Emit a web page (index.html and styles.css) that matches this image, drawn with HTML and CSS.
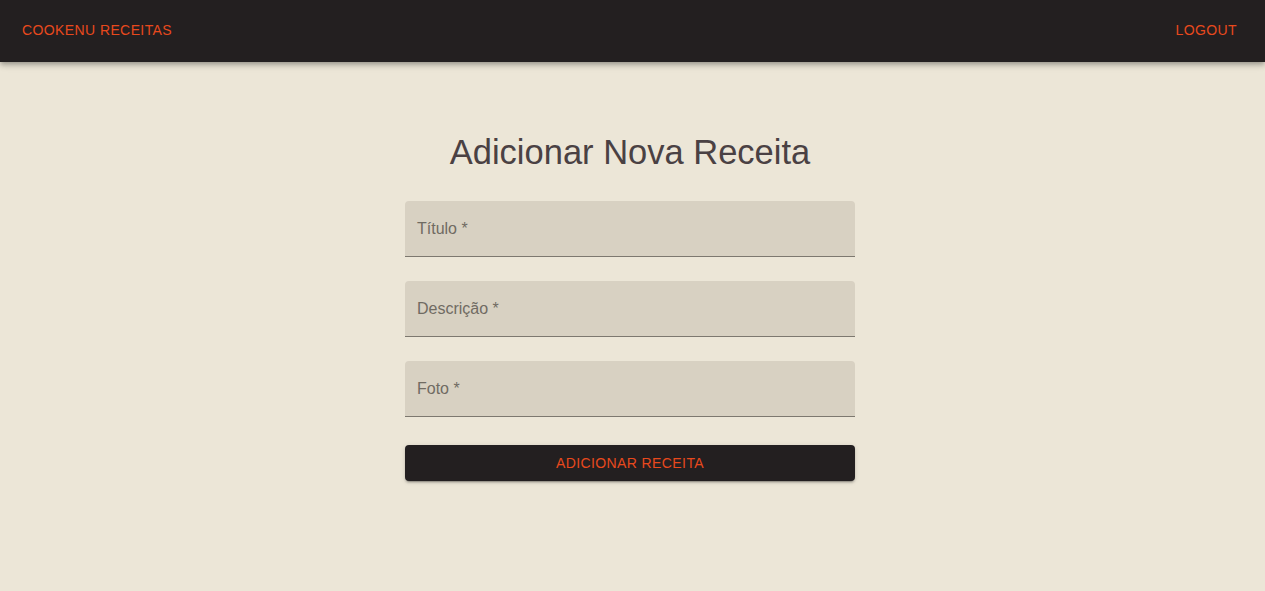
FILE: index.html
```html
<!DOCTYPE html>
<html lang="pt">
<head>
<meta charset="utf-8">
<title>Cookenu Receitas</title>
<link rel="stylesheet" href="styles.css">
</head>
<body>
<header class="appbar">
  <button class="nav-btn">Cookenu Receitas</button>
  <button class="nav-btn">Logout</button>
</header>
<main class="page">
  <h1 class="title">Adicionar Nova Receita</h1>
  <form class="form">
    <div class="field"><label class="label">Título *</label></div>
    <div class="field"><label class="label">Descrição *</label></div>
    <div class="field"><label class="label">Foto *</label></div>
    <button type="button" class="submit">Adicionar Receita</button>
  </form>
</main>
</body>
</html>
```
FILE: styles.css
```css
* { box-sizing: border-box; }
html, body { margin: 0; padding: 0; }
body {
  background: #ece6d7;
  font-family: "Liberation Sans", Arial, sans-serif;
  height: 591px;
  overflow: hidden;
}
.appbar {
  height: 62px;
  background: #231f20;
  display: flex;
  align-items: center;
  justify-content: space-between;
  padding: 0 20px 2px 14px;
  box-shadow: 0 2px 4px -1px rgba(0,0,0,0.2), 0 4px 5px 0 rgba(0,0,0,0.14), 0 1px 10px 0 rgba(0,0,0,0.12);
  position: relative;
}
.nav-btn {
  background: none;
  border: none;
  color: #e8491d;
  font-family: "Liberation Sans", Arial, sans-serif;
  font-size: 14px;
  letter-spacing: 0.4px;
  text-transform: uppercase;
  padding: 6px 8px;
  line-height: 1.75;
  cursor: pointer;
}
.page {
  display: flex;
  flex-direction: column;
  align-items: center;
  padding-top: 64px;
  padding-right: 5px;
}
.title {
  margin: 0;
  font-weight: 400;
  font-size: 34.5px;
  line-height: 52px;
  color: #4a4143;
}
.form {
  width: 450px;
  display: flex;
  flex-direction: column;
  margin-top: 23px;
}
.field {
  height: 56px;
  background: #d8d1c2;
  border-radius: 4px 4px 0 0;
  border-bottom: 1px solid #7d786f;
  display: flex;
  align-items: center;
  padding: 0 12px 0;
  margin-bottom: 24px;
}
.label {
  font-family: "Liberation Sans", Arial, sans-serif;
  font-size: 16px;
  color: #706b62;
}
.submit {
  margin-top: 4px;
  height: 36px;
  background: #231f20;
  color: #e8491d;
  border: none;
  border-radius: 4px;
  font-family: "Liberation Sans", Arial, sans-serif;
  font-size: 14px;
  letter-spacing: 0.4px;
  text-transform: uppercase;
  box-shadow: 0 3px 1px -2px rgba(0,0,0,0.2), 0 2px 2px 0 rgba(0,0,0,0.14), 0 1px 5px 0 rgba(0,0,0,0.12);
  cursor: pointer;
}
```
